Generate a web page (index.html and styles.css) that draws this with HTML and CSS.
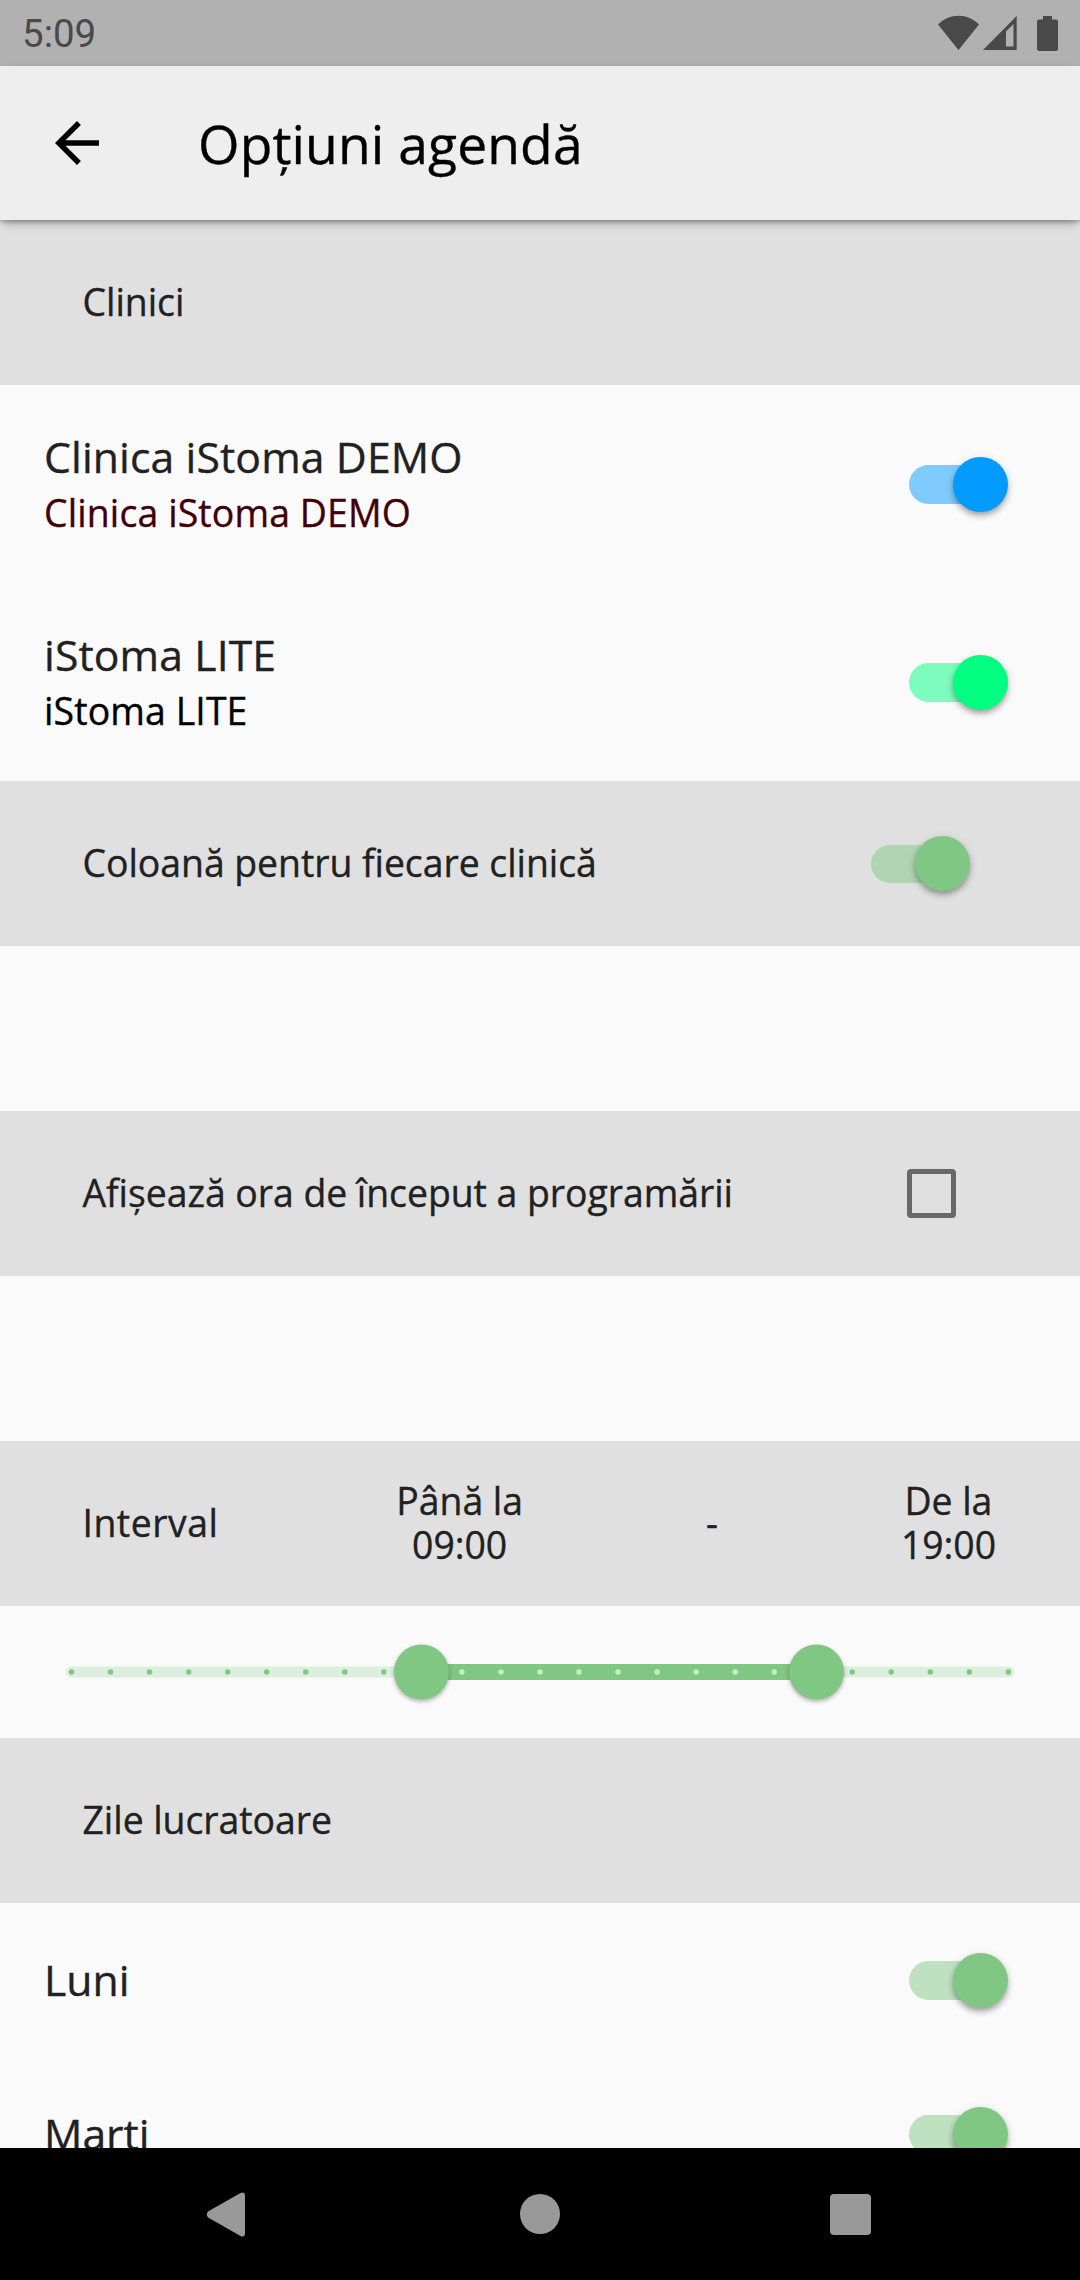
FILE: index.html
```html
<!DOCTYPE html>
<html lang="ro">
<head>
<meta charset="utf-8">
<title>Opțiuni agendă</title>
<link rel="stylesheet" href="styles.css">
</head>
<body>
<div class="status-bar">
  <span class="clock">5:09</span>
  <svg class="status-icons" width="122" height="40" viewBox="0 0 122 40">
    <!-- wifi -->
    <path d="M0 9.5C11 -2.3 30 -2.3 41 9.5L20.5 35z"/>
    <!-- signal -->
    <path fill-rule="evenodd" d="M45 35L78.7 1V35zM68 31.5H75.5V9L68 16.5z"/>
    <!-- battery -->
    <path d="M105 1h9v3.5h4a2 2 0 0 1 2 2V34a2 2 0 0 1-2 2H101a2 2 0 0 1-2-2V6.500a2 2 0 0 1 2-2h4z"/>
  </svg>
</div>

<header class="app-bar">
  <svg class="back" width="66" height="66" viewBox="0 0 24 24">
    <path d="M20 11H7.830l5.590-5.590L12 4l-8 8 8 8 1.410-1.410L7.830 13H20v-2z"/>
  </svg>
  <h1>Opțiuni agendă</h1>
</header>

<main class="content">
  <div class="section">Clinici</div>
  <div class="item clinic">
    <div class="labels">
      <div class="name">Clinica iStoma DEMO</div>
      <div class="alias red">Clinica iStoma DEMO</div>
    </div>
    <div class="switch blue"></div>
  </div>
  <div class="item clinic">
    <div class="labels">
      <div class="name">iStoma LITE</div>
      <div class="alias">iStoma LITE</div>
    </div>
    <div class="switch spring"></div>
  </div>

  <div class="section">
    <span>Coloană pentru fiecare clinică</span>
    <div class="switch"></div>
  </div>
  <div class="spacer"></div>
  <div class="section">
    <span>Afișează ora de început a programării</span>
    <div class="checkbox"></div>
  </div>
  <div class="spacer"></div>

  <div class="section interval">
    <span class="interval-label">Interval</span>
    <div class="hour">Până la<br>09:00</div>
    <span>-</span>
    <div class="hour">De la<br>19:00</div>
  </div>
  <!-- 24 hours, from 9 to 19 selected -->
  <div class="slider">
    <svg width="1080" height="132" viewBox="0 0 1080 132">
      <rect class="track" x="66" y="60.500" width="948" height="11" rx="5.500"/>
      <rect class="track-active" x="421.500" y="58" width="395" height="16"/>
      <path class="ticks" d="M71.500 66H390"/>
      <path class="ticks light" d="M461.900 66H780"/>
      <path class="ticks" d="M852.200 66H1009"/>
      <circle class="thumb" cx="421.500" cy="66" r="27.500"/>
      <circle class="thumb" cx="816.500" cy="66" r="27.500"/>
    </svg>
  </div>

  <div class="section">Zile lucratoare</div>
  <div class="item">
    <div class="name">Luni</div>
    <div class="switch"></div>
  </div>
  <div class="item">
    <div class="name">Marti</div>
    <div class="switch"></div>
  </div>
</main>

<nav class="nav-bar">
  <svg width="1080" height="132" viewBox="0 0 1080 132">
    <path d="M208 63.600L240.500 45Q245 43 245 48V85Q245 90 240.500 88L208 69.400Q205.500 66.500 208 63.600z"/>
    <circle cx="540" cy="66" r="20"/>
    <rect x="830" y="46" width="41" height="41" rx="4"/>
  </svg>
</nav>
</body>
</html>
```
FILE: styles.css
```css
* {
  box-sizing: border-box;
}

body {
  display: flex;
  flex-direction: column;
  width: 1080px;
  height: 2280px;
  margin: 0;
  overflow: hidden;
  background: #fafafa;
  color: #212121;
  font-family: "Open Sans", "Noto Sans", sans-serif;
  -webkit-text-stroke: .35px;
}

svg {
  display: block;
}

/* Android status bar */
.status-bar {
  display: flex;
  flex: none;
  justify-content: space-between;
  height: 66px;
  padding: 0 20px 0 22px;
  background: #b1b1b1;
}

.clock {
  color: #494949;
  font: 38.5px/68px Roboto, sans-serif;
  -webkit-text-stroke: 0;
}

.status-icons {
  margin: 15px 0 0;
  fill: #494949;
}

/* title bar */
.app-bar {
  z-index: 1;
  display: flex;
  flex: none;
  align-items: center;
  height: 154px;
  padding-left: 44px;
  background: #eee;
  color: #000;
  box-shadow: 0 5px 10px -3px rgba(0, 0, 0, .35), 0 2px 4px rgba(0, 0, 0, .22);
}

.app-bar h1 {
  margin: 0 0 0 88px;
  font-size: 53.4px;
  font-weight: normal;
  letter-spacing: .1px;
}

.content {
  flex: 1;
  min-height: 0;
  overflow: hidden;
}

.section {
  display: flex;
  align-items: center;
  justify-content: space-between;
  height: 165px;
  padding: 0 110px 2px 82.5px;
  background: #e0e0e0;
  font-size: 37.4px;
  letter-spacing: -.05px;
}

.spacer {
  height: 165px;
}

.item {
  display: flex;
  align-items: center;
  justify-content: space-between;
  height: 154px;
  padding: 0 72px 0 44px;
}

.item.clinic {
  height: 198px;
}

.labels {
  padding-top: 8px;
  letter-spacing: .12px;
}

.name {
  font-size: 42.7px;
  line-height: 50px;
}

.alias {
  color: #000;
  font-size: 37.4px;
  line-height: 62px;
}

.alias.red {
  color: #400008;
}

/* the track is the ::before, the thumb is the ::after */
.switch {
  position: relative;
  width: 99px;
  height: 55px;
  color: #81c784;
}

.section .switch {
  top: 1px;
}

.switch.blue {
  color: #039bff;
}

.switch.spring {
  color: #00ff80;
}

.switch::before {
  content: "";
  position: absolute;
  top: 8.5px;
  left: 0;
  width: 91px;
  height: 38.5px;
  border-radius: 20px;
  background: currentColor;
  opacity: .5;
}

.switch::after {
  content: "";
  position: absolute;
  top: 0;
  right: 0;
  width: 55px;
  height: 55px;
  border-radius: 50%;
  background: currentColor;
  box-shadow: 0 4px 6px -1px rgba(0, 0, 0, .32), 0 2px 10px rgba(0, 0, 0, .13);
}

.checkbox {
  width: 49.5px;
  height: 49.5px;
  margin: 2px 14px 0 0;
  border: 5.5px solid #686868;
  border-radius: 4px;
}

.section.interval {
  padding-right: 84px;
}

.interval-label {
  letter-spacing: .5px;
}

.hour {
  line-height: 44px;
  text-align: center;
}

/* keeps the first hour a bit closer to the label */
.interval-label + .hour {
  margin-left: -5px;
}

/* hour range slider */
.slider {
  height: 132px;
}

.track {
  fill: #ddeede;
}

.track-active {
  fill: #81c784;
}

.ticks {
  fill: none;
  stroke: #81c784;
  stroke-width: 5.5px;
  stroke-linecap: round;
  stroke-dasharray: 0 39.04;
}

.ticks.light {
  stroke: #c3efc6;
}

.thumb {
  fill: #81c784;
  filter: drop-shadow(0 2px 2px rgba(0, 0, 0, .3));
}

/* Android navigation */
.nav-bar {
  flex: none;
  height: 132px;
  background: #000;
}

.nav-bar svg {
  fill: #999;
}
```
